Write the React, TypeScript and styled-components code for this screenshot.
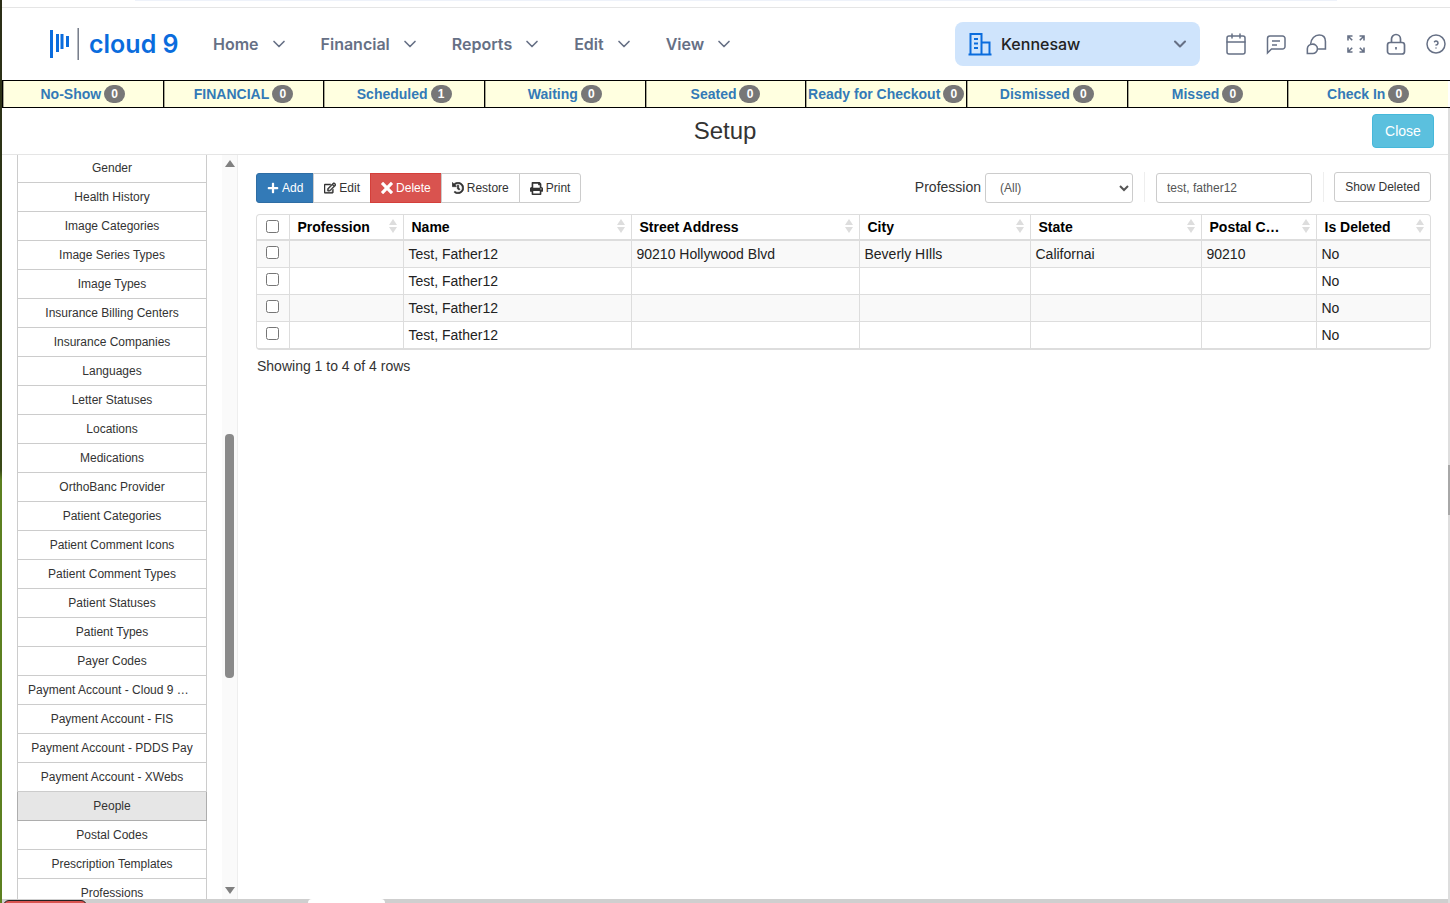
import styled, { createGlobalStyle } from "styled-components";
import { Calendar, ChevronDown } from "lucide-react";
import { TbHelpCircle } from "react-icons/tb";
import { FaPlus, FaRegEdit, FaHistory, FaPrint } from "react-icons/fa";
import { ImCross } from "react-icons/im";

const GlobalStyle = createGlobalStyle`
  html, body {
    margin: 0;
    padding: 0;
    height: 100%;
    overflow: hidden;
    background: #fff;
    font-family: "Liberation Sans", Arial, sans-serif;
    color: #333;
  }
  * { box-sizing: border-box; }
`;

const Page = styled.div`
  display: flex;
  width: 1450px;
  height: 903px;
  overflow: hidden;
`;

const Wallpaper = styled.div`
  flex: 0 0 2px;
  background: linear-gradient(#2b2e17 0, #2f3a16 300px, #3a4a18 470px, #5c8020 480px, #5c8020 100%);
`;

const Column = styled.div`
  flex: 1;
  min-width: 0;
  display: flex;
  flex-direction: column;
`;

const TopStrip = styled.div`
  flex: 0 0 8px;
  padding: 0 113px 0 133px;
  border-bottom: 1px solid #e5e5e5;
`;

const TopGlow = styled.div`
  height: 1px;
  background: #eef2fa;
`;

const Header = styled.header`
  flex: 0 0 72px;
  display: flex;
  align-items: center;
  padding-left: 48px;
`;

const Logo = styled.div`
  display: flex;
  align-items: center;
  width: 163px;
  color: #0a6cdd;
  font-family: Inter, sans-serif;
  font-weight: 600;
  font-size: 25px;
`;

const LogoMark = styled.svg`
  display: block;
  margin-right: 9px;
`;

const Nav = styled.nav`
  display: flex;
  align-items: center;
  width: 742px;
`;

const NavItem = styled.div`
  display: flex;
  align-items: center;
  gap: 10px;
  margin-right: 32px;
  color: #667085;
  font-family: Inter, sans-serif;
  font-weight: 600;
  font-size: 16px;
`;

const LocationPicker = styled.div`
  display: flex;
  align-items: center;
  width: 245px;
  height: 44px;
  padding: 0 10px 0 13px;
  border-radius: 8px;
  background: #cfe4fc;
  color: #222;
  font-family: Inter, sans-serif;
  font-weight: 500;
  font-size: 16px;
`;

const LocationName = styled.span`
  flex: 1;
  margin-left: 9px;
`;

const IconRow = styled.div`
  display: flex;
  align-items: center;
  gap: 16px;
  margin-left: 24px;
  color: #667085;
`;

const IconSvg = styled.svg`
  display: block;
  flex: none;
`;

const StatusBar = styled.div`
  flex: 0 0 28px;
  display: flex;
  padding-right: 2px;
  border-top: 1px solid #000;
  border-bottom: 1px solid #000;
`;

const StatusCell = styled.div`
  flex: 1;
  min-width: 0;
  display: flex;
  align-items: center;
  justify-content: center;
  gap: 3px;
  border-left: 1px solid #000;
  box-shadow: inset 1px 0 0 rgba(0, 0, 0, 0.35);
  background: #ffffe0;
  color: #337ab7;
  font-weight: 700;
  font-size: 14px;
  white-space: nowrap;
`;

const Badge = styled.span`
  display: inline-block;
  min-width: 21px;
  padding: 3px 7px;
  border-radius: 10px;
  background: #777;
  color: #fff;
  font-weight: 700;
  font-size: 12px;
  line-height: 12px;
  text-align: center;
`;

const Lower = styled.div`
  flex: 1;
  min-height: 0;
  display: flex;
`;

const LowerMain = styled.div`
  flex: 1;
  min-width: 0;
  display: flex;
  flex-direction: column;
`;

const PageRail = styled.div`
  flex: 0 0 2px;
  display: flex;
  flex-direction: column;
  padding-top: 357px;
  background: #dedede;
`;

const PageRailThumb = styled.div`
  height: 50px;
  background: #a8a8a8;
`;

const SetupBar = styled.div`
  flex: 0 0 47px;
  display: grid;
  grid-template-columns: 1fr auto 1fr;
  align-items: center;
  padding: 0 14px 1px;
  border-bottom: 1px solid #e5e5e5;
`;

const SetupTitle = styled.h1`
  grid-column: 2;
  margin: 0;
  font-weight: 400;
  font-size: 24px;
  color: #333;
`;

const CloseButton = styled.button`
  grid-column: 3;
  justify-self: end;
  width: 62px;
  height: 34px;
  border: 1px solid #46b8da;
  border-radius: 4px;
  background: #5bc0de;
  color: #fff;
  font-family: "Liberation Sans", sans-serif;
  font-size: 14px;
`;

const Body = styled.div`
  flex: 1;
  min-height: 0;
  display: flex;
`;

const Sidebar = styled.aside`
  flex: 0 0 236px;
  display: flex;
  padding-left: 15px;
  border-right: 1px solid #eee;
`;

const SideList = styled.div`
  flex: 0 0 190px;
  height: 100%;
  overflow: hidden;
`;

const SideItem = styled.div<{ $active?: boolean }>`
  height: 29px;
  padding: 0 10px;
  border: 1px solid ${(p) => (p.$active ? "#adadad" : "#ccc")};
  border-top: 0;
  background: ${(p) => (p.$active ? "#e6e6e6" : "#fff")};
  color: #333;
  font-size: 12px;
  line-height: 28px;
  text-align: center;
  white-space: nowrap;
  overflow: hidden;
  text-overflow: ellipsis;

  &:first-child {
    height: 28px;
    line-height: 27px;
  }
`;

const ScrollTrack = styled.div`
  flex: 1;
  display: flex;
  flex-direction: column;
  align-items: center;
  padding-top: 5px;
  margin-left: 15px;
  background: #fafafa;
`;

const ScrollArrow = styled.div<{ $down?: boolean }>`
  flex: none;
  width: 0;
  height: 0;
  border-left: 5px solid transparent;
  border-right: 5px solid transparent;
  ${(p) => (p.$down ? "border-top: 7px solid #808080;" : "border-bottom: 7px solid #808080;")}
`;

const ScrollThumb = styled.div`
  flex: none;
  width: 9px;
  height: 244px;
  margin: 267px 0 209px;
  border-radius: 4px;
  background: #8a8a8a;
`;

const Main = styled.main`
  flex: 1;
  min-width: 0;
  padding: 18px 17px 0 18px;
`;

const Toolbar = styled.div`
  display: flex;
  align-items: flex-start;
  justify-content: space-between;
  height: 30px;
  margin-bottom: 11px;
`;

const ButtonGroup = styled.div`
  display: flex;
`;

const variants = {
  default: "background:#fff;border-color:#ccc;color:#333;",
  primary: "background:#337ab7;border-color:#2e6da4;color:#fff;",
  danger: "background:#d9534f;border-color:#d43f3a;color:#fff;",
};

const ToolButton = styled.button<{ $variant?: keyof typeof variants }>`
  display: flex;
  align-items: center;
  gap: 3px;
  height: 30px;
  padding: 0 10px;
  border: 1px solid;
  margin-left: -1px;
  ${(p) => variants[p.$variant ?? "default"]}
  font-family: "Liberation Sans", sans-serif;
  font-size: 12px;

  &:first-child {
    margin-left: 0;
    border-radius: 3px 0 0 3px;
  }
  &:last-child {
    border-radius: 0 3px 3px 0;
  }
`;

const BoldIcon = styled.span`
  display: flex;

  svg {
    stroke: currentColor;
    stroke-width: 24px;
  }
`;

const Filters = styled.div`
  display: flex;
  align-items: flex-start;
`;

const FilterLabel = styled.label`
  margin-right: 4px;
  color: #333;
  font-size: 14px;
  line-height: 28px;
`;

const FilterSelect = styled.select`
  width: 148px;
  height: 30px;
  padding-left: 10px;
  border: 1px solid #ccc;
  border-radius: 3px;
  background: #fff;
  color: #555;
  font-family: "Liberation Sans", sans-serif;
  font-size: 12px;
`;

const FilterInput = styled.input`
  width: 156px;
  height: 30px;
  margin-left: 1px;
  padding: 0 10px;
  border: 1px solid #ccc;
  border-radius: 3px;
  color: #555;
  font-family: "Liberation Sans", sans-serif;
  font-size: 12px;
`;

const Divider = styled.span`
  width: 1px;
  height: 30px;
  margin: -1px 10px 0 11px;
  background: #eee;
`;

const ShowDeleted = styled.button`
  width: 97px;
  height: 30px;
  margin-top: -1px;
  border: 1px solid #ccc;
  border-radius: 3px;
  background: #fff;
  color: #333;
  font-family: "Liberation Sans", sans-serif;
  font-size: 12px;
`;

const TableFrame = styled.div`
  width: 1175px;
  border: 1px solid #ddd;
  border-bottom-width: 2px;
  border-radius: 4px;
  overflow: hidden;
`;

const Table = styled.table`
  width: 1173px;
  table-layout: fixed;
  border-collapse: collapse;
  font-size: 14px;
`;

const HeadCell = styled.th<{ $w: number }>`
  position: relative;
  width: ${(p) => p.$w}px;
  height: 25px;
  padding: 0 31px 0 8px;
  border-left: 1px solid #ddd;
  border-bottom: 2px solid #ddd;
  color: #000;
  font-weight: 700;
  text-align: left;
  white-space: nowrap;
  overflow: hidden;
  text-overflow: ellipsis;

  &:first-child {
    border-left: 0;
    padding: 0;
    text-align: center;
  }
`;

const SortMark = styled.span`
  position: absolute;
  top: 4px;
  right: 6px;
  display: flex;
  flex-direction: column;
  gap: 2px;

  &::before,
  &::after {
    content: "";
    border-left: 4px solid transparent;
    border-right: 4px solid transparent;
  }
  &::before {
    border-bottom: 6px solid #ddd;
  }
  &::after {
    border-top: 6px solid #ddd;
  }
`;

const Row = styled.tr<{ $striped?: boolean }>`
  height: 27px;
  background: ${(p) => (p.$striped ? "#f9f9f9" : "#fff")};
`;

const Cell = styled.td`
  padding: 0 5px;
  border-left: 1px solid #ddd;
  border-top: 1px solid #ddd;
  color: #222;
  white-space: nowrap;

  tr:first-child > & {
    border-top: 0;
  }
  &:first-child {
    border-left: 0;
    padding: 0;
    text-align: center;
  }
`;

const Check = styled.input`
  display: block;
  margin: 0 auto 2px;
  width: 13px;
  height: 13px;
`;

const Summary = styled.div`
  margin: 8px 0 0 1px;
  color: #333;
  font-size: 14px;
  line-height: 17px;
`;

const BottomBar = styled.div`
  flex: 0 0 4px;
  display: flex;
  overflow: hidden;
  background: #cfcfcf;
`;

const BottomTab = styled.div`
  width: 84px;
  height: 8px;
  margin: 1px 221px 0 1px;
  border: 1px solid #222;
  border-radius: 6px 6px 0 0;
  background: #d9534f;
`;

const BottomPill = styled.div`
  width: 77px;
  height: 8px;
  border-radius: 4px 4px 0 0;
  background: #fff;
`;

const sideItems = [
  "Gender",
  "Health History",
  "Image Categories",
  "Image Series Types",
  "Image Types",
  "Insurance Billing Centers",
  "Insurance Companies",
  "Languages",
  "Letter Statuses",
  "Locations",
  "Medications",
  "OrthoBanc Provider",
  "Patient Categories",
  "Patient Comment Icons",
  "Patient Comment Types",
  "Patient Statuses",
  "Patient Types",
  "Payer Codes",
  "Payment Account - Cloud 9 Payments",
  "Payment Account - FIS",
  "Payment Account - PDDS Pay",
  "Payment Account - XWebs",
  "People",
  "Postal Codes",
  "Prescription Templates",
  "Professions",
];

const statuses: [string, number][] = [
  ["No-Show", 0],
  ["FINANCIAL", 0],
  ["Scheduled", 1],
  ["Waiting", 0],
  ["Seated", 0],
  ["Ready for Checkout", 0],
  ["Dismissed", 0],
  ["Missed", 0],
  ["Check In", 0],
];

const columns: [string, number][] = [
  ["Profession", 114],
  ["Name", 228],
  ["Street Address", 228],
  ["City", 171],
  ["State", 171],
  ["Postal Code", 115],
  ["Is Deleted", 114],
];

const rows = [
  ["", "Test, Father12", "90210 Hollywood Blvd", "Beverly HIlls", "Californai", "90210", "No"],
  ["", "Test, Father12", "", "", "", "", "No"],
  ["", "Test, Father12", "", "", "", "", "No"],
  ["", "Test, Father12", "", "", "", "", "No"],
];

function BuildingIcon() {
  return (
    <IconSvg width="24" height="24" viewBox="0 0 24 24" fill="none" stroke="#0a6cdd" strokeWidth="2">
      <path d="M0.5 22.5h23M2.5 22.5V2h11v20.5M13.5 10.5h8v12" />
      <path d="M6 7h4M6 11.5h4M6 16h4" />
    </IconSvg>
  );
}

function NoteIcon() {
  return (
    <IconSvg width="24" height="24" viewBox="0 0 24 24" fill="none" stroke="currentColor" strokeWidth="1.5">
      <path d="M3.5 21V6.5A2.5 2.5 0 0 1 6 4h12.5A2.5 2.5 0 0 1 21 6.5v8a2.5 2.5 0 0 1-2.5 2.5H7.5z" />
      <path d="M8 9h8M8 13h5" />
    </IconSvg>
  );
}

function BubblesIcon() {
  return (
    <IconSvg width="24" height="24" viewBox="-1 -0.5 21.5 21.5" fill="none" stroke="currentColor" strokeWidth="1.4">
      <path d="M5 10.2C5.3 5.6 8.6 2.2 12.6 2.2c3.6 0 5.6 2.3 5.6 5.7v6.9h-6.6" />
      <path d="M6.2 10.4a4.2 4.2 0 1 1 0 8.3H2v-4.1a4.2 4.2 0 0 1 4.2-4.2z" />
    </IconSvg>
  );
}

function ExpandIcon() {
  return (
    <IconSvg width="24" height="24" viewBox="-2 -2 24 24" fill="none" stroke="currentColor" strokeWidth="1.6">
      <path d="M2 6.5V2h4.5M2.2 2.2l4 4M18 6.5V2h-4.5M17.8 2.2l-4 4M2 13.5V18h4.5M2.2 17.8l4-4M18 13.5V18h-4.5M17.8 17.8l-4-4" />
    </IconSvg>
  );
}

function LockIcon() {
  return (
    <IconSvg width="24" height="24" viewBox="0 0 24 24" fill="none" stroke="currentColor" strokeWidth="1.7">
      <rect x="3.5" y="10.5" width="17" height="11.5" rx="2.5" />
      <path d="M7.5 10.5V7a4.5 4.5 0 0 1 9 0v3.5M12 15v2.5" />
    </IconSvg>
  );
}

export default function App() {
  return (
    <Page>
      <GlobalStyle />
      <Wallpaper />
      <Column>
        <TopStrip>
          <TopGlow />
        </TopStrip>
        <Header>
          <Logo>
            <LogoMark width="30" height="32" viewBox="0 0 30 32" fill="#0a6cdd">
              <rect x="0" y="2" width="3" height="28" />
              <rect x="6" y="6" width="3" height="18" />
              <rect x="10.5" y="6" width="3" height="15" />
              <rect x="16" y="8" width="3" height="11" />
              <rect x="27.5" y="0" width="1.4" height="32" fill="#6b7280" />
            </LogoMark>
            cloud 9
          </Logo>
          <Nav>
            {["Home", "Financial", "Reports", "Edit", "View"].map((label) => (
              <NavItem key={label}>
                {label}
                <ChevronDown size={20} strokeWidth={2} />
              </NavItem>
            ))}
          </Nav>
          <LocationPicker>
            <BuildingIcon />
            <LocationName>Kennesaw</LocationName>
            <ChevronDown size={20} strokeWidth={2.5} color="#667085" />
          </LocationPicker>
          <IconRow>
            <Calendar size={24} strokeWidth={1.5} />
            <NoteIcon />
            <BubblesIcon />
            <ExpandIcon />
            <LockIcon />
            <TbHelpCircle size={24} strokeWidth={1.5} />
          </IconRow>
        </Header>
        <StatusBar>
          {statuses.map(([label, count]) => (
            <StatusCell key={label}>
              {label}
              <Badge>{count}</Badge>
            </StatusCell>
          ))}
        </StatusBar>
        <Lower>
          <LowerMain>
            <SetupBar>
              <SetupTitle>Setup</SetupTitle>
              <CloseButton>Close</CloseButton>
            </SetupBar>
            <Body>
              <Sidebar>
                <SideList>
                  {sideItems.map((item) => (
                    <SideItem key={item} $active={item === "People"}>
                      {item}
                    </SideItem>
                  ))}
                </SideList>
                <ScrollTrack>
                  <ScrollArrow />
                  <ScrollThumb />
                  <ScrollArrow $down />
                </ScrollTrack>
              </Sidebar>
              <Main>
                <Toolbar>
                  <ButtonGroup>
                    <ToolButton $variant="primary">
                      <FaPlus size={12} /> Add
                    </ToolButton>
                    <ToolButton>
                      <BoldIcon>
                        <FaRegEdit size={12} />
                      </BoldIcon>
                      Edit
                    </ToolButton>
                    <ToolButton $variant="danger">
                      <ImCross size={12} /> Delete
                    </ToolButton>
                    <ToolButton>
                      <BoldIcon>
                        <FaHistory size={12} />
                      </BoldIcon>
                      Restore
                    </ToolButton>
                    <ToolButton>
                      <FaPrint size={13} /> Print
                    </ToolButton>
                  </ButtonGroup>
                  <Filters>
                    <FilterLabel>Profession</FilterLabel>
                    <FilterSelect defaultValue="all">
                      <option value="all">(All)</option>
                    </FilterSelect>
                    <Divider />
                    <FilterInput defaultValue="test, father12" />
                    <Divider />
                    <ShowDeleted>Show Deleted</ShowDeleted>
                  </Filters>
                </Toolbar>
                <TableFrame>
                  <Table>
                    <thead>
                      <tr>
                        <HeadCell $w={32}>
                          <Check type="checkbox" />
                        </HeadCell>
                        {columns.map(([label, width]) => (
                          <HeadCell key={label} $w={width}>
                            {label}
                            <SortMark />
                          </HeadCell>
                        ))}
                      </tr>
                    </thead>
                    <tbody>
                      {rows.map((row, i) => (
                        <Row key={i} $striped={i % 2 === 0}>
                          <Cell>
                            <Check type="checkbox" />
                          </Cell>
                          {row.map((value, j) => (
                            <Cell key={j}>{value}</Cell>
                          ))}
                        </Row>
                      ))}
                    </tbody>
                  </Table>
                </TableFrame>
                <Summary>Showing 1 to 4 of 4 rows</Summary>
              </Main>
            </Body>
            <BottomBar>
              <BottomTab />
              <BottomPill />
            </BottomBar>
          </LowerMain>
          <PageRail>
            <PageRailThumb />
          </PageRail>
        </Lower>
      </Column>
    </Page>
  );
}
